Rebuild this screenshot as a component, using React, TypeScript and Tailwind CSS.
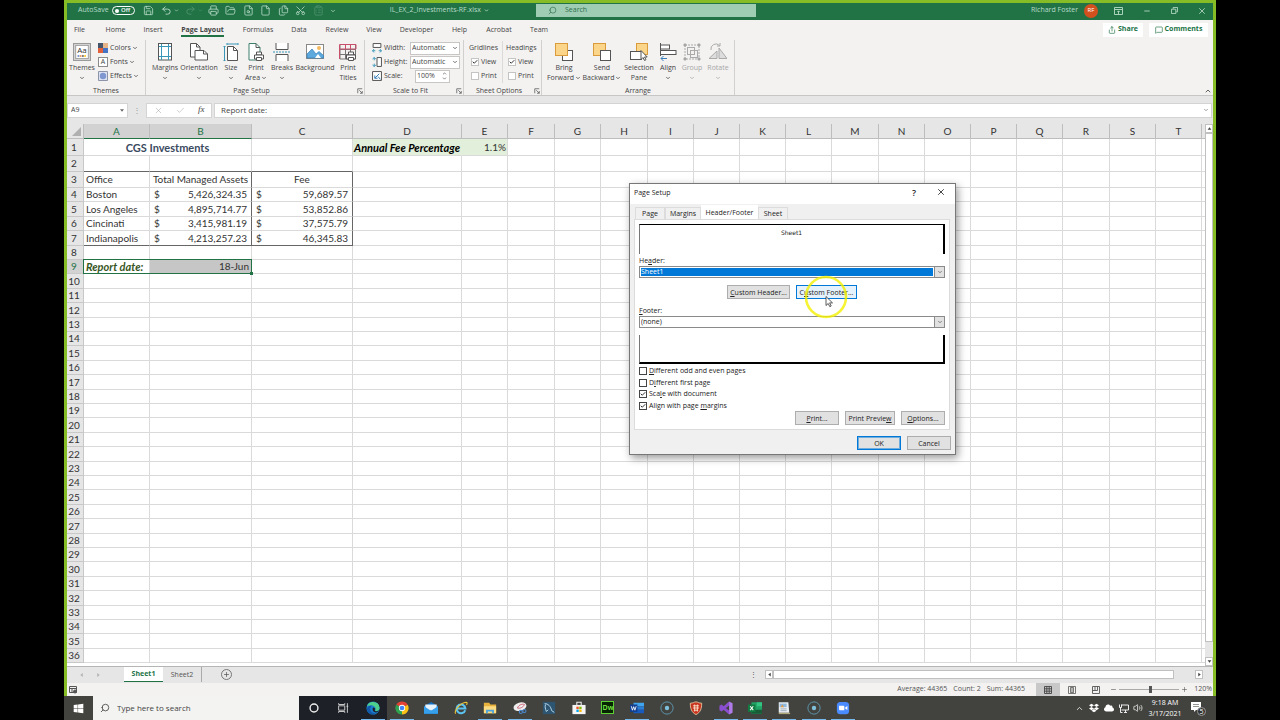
import { useState } from 'react';
import type { ReactNode } from 'react';
import clsx from 'clsx';
import {
    Check,
    ChevronDown,
    ChevronUp,
    ClipboardList,
    File,
    FileSearch,
    Files,
    FolderOpen,
    MessageSquare,
    Minus,
    Plus,
    Printer,
    Redo2,
    Save,
    Scissors,
    Search,
    Share,
    Undo2,
    Volume2,
    X,
} from 'lucide-react';
import { FaCloud, FaDropbox, FaWindows } from 'react-icons/fa';

const ribbonTabs = [
    { name: 'File', width: 'w-[25px]' },
    { name: 'Home', width: 'w-[47px]' },
    { name: 'Insert', width: 'w-[28px]' },
    { name: 'Page Layout', width: 'w-[71px]' },
    { name: 'Formulas', width: 'w-[40px]' },
    { name: 'Data', width: 'w-[42px]' },
    { name: 'Review', width: 'w-[34px]' },
    { name: 'View', width: 'w-[40px]' },
    { name: 'Developer', width: 'w-[45px]' },
    { name: 'Help', width: 'w-[41px]' },
    { name: 'Acrobat', width: 'w-[38px]' },
    { name: 'Team', width: 'w-[42px]' },
];

const columns = [
    { name: 'A', width: 'w-[66px]' },
    { name: 'B', width: 'w-[102px]' },
    { name: 'C', width: 'w-[101px]' },
    { name: 'D', width: 'w-[109px]' },
    { name: 'E', width: 'w-[46px]' },
    { name: 'F', width: 'w-[47px]' },
    { name: 'G', width: 'w-[46px]' },
    { name: 'H', width: 'w-[47px]' },
    { name: 'I', width: 'w-[46px]' },
    { name: 'J', width: 'w-[46px]' },
    { name: 'K', width: 'w-[46px]' },
    { name: 'L', width: 'w-[46px]' },
    { name: 'M', width: 'w-[47px]' },
    { name: 'N', width: 'w-[46px]' },
    { name: 'O', width: 'w-[46px]' },
    { name: 'P', width: 'w-[46px]' },
    { name: 'Q', width: 'w-[46px]' },
    { name: 'R', width: 'w-[47px]' },
    { name: 'S', width: 'w-[46px]' },
    { name: 'T', width: 'w-[46px]' },
];

const offices = [
    { office: 'Boston', assets: '5,426,324.35', fee: '59,689.57' },
    { office: 'Los Angeles', assets: '4,895,714.77', fee: '53,852.86' },
    { office: 'Cincinati', assets: '3,415,981.19', fee: '37,575.79' },
    { office: 'Indianapolis', assets: '4,213,257.23', fee: '46,345.83' },
];

/* ---------- ribbon icons, all on an 18 unit canvas ---------- */

function Icon({ children, className = 'h-[18px] w-[18px]' }: { children: ReactNode; className?: string }) {
    return (
        <svg viewBox="0 0 18 18" className={clsx('shrink-0', className)} fill="none" stroke="#555" strokeWidth="1">
            {children}
        </svg>
    );
}

const ThemesIcon = () => (
    <svg viewBox="0 0 18 18" className="h-[18px] w-[18px] border border-[#9a9a9a] bg-[#d4d4d4]" aria-hidden="true">
        <rect x="2" y="1.5" width="14" height="15" fill="#fff" stroke="#888" strokeWidth=".8" />
        <text x="9" y="10.5" textAnchor="middle" fontSize="9" fontFamily="Open Sans, sans-serif" fill="#333">
            Aa
        </text>
        <path d="M4 13.5h2" stroke="#4472c4" strokeWidth="1.6" />
        <path d="M6.5 13.5h2" stroke="#ed7d31" strokeWidth="1.6" />
        <path d="M9 13.5h2" stroke="#555" strokeWidth="1.6" />
        <path d="M11.5 13.5h2" stroke="#ffc000" strokeWidth="1.6" />
    </svg>
);

const MarginsIcon = () => (
    <Icon>
        <rect x="2.5" y=".5" width="13" height="16.5" fill="#fff" />
        <path d="M5.5 1v16M12.5 1v16M3 3.5h12M3 13.5h12" stroke="#3a96b8" />
    </Icon>
);

const OrientationIcon = () => (
    <Icon>
        <path d="M.5 .5h6l3.5 3.5v10H.5z" fill="#fff" />
        <path d="M6.5 .5v3.5h3.5" />
        <path d="M5 7.5h9l3.5 3.5v6H5z" fill="#fff" />
        <path d="M13.5 7.5v3.5h4" />
    </Icon>
);

const SizeIcon = () => (
    <Icon>
        <path d="M5.5 3.5h6l4 4v10h-10z" fill="#fff" />
        <path d="M11.5 3.5v4h4" />
        <path d="M5 1h11M2.5 3.5v14M5 0v2M16 0v2M1.5 3.5h2M1.5 17.5h2" stroke="#3a96b8" />
    </Icon>
);

const PrinterPart = () => (
    <>
        <path d="M9.5 9h5v3h-5z" fill="#fff" />
        <path d="M7.5 12h9v4h-9z" fill="#fff" />
        <path d="M9.5 14.5h5v3h-5z" fill="#fff" />
    </>
);

const PrintAreaIcon = () => (
    <Icon>
        <path d="M2 .5h7l4 4v12.5H2z" fill="#fff" stroke="#3d7f6d" />
        <path d="M9 .5v4h4" />
        <PrinterPart />
    </Icon>
);

const BreaksIcon = () => (
    <Icon>
        <path d="M3 0v6.5h12V0M3 18v-6.5h12V18" fill="#fff" />
        <path d="M0 9h18" stroke="#3a96b8" strokeDasharray="2 1" />
    </Icon>
);

const BackgroundIcon = () => (
    <Icon>
        <rect x=".5" y="1.5" width="17" height="14" fill="#fff" stroke="#888" />
        <circle cx="13" cy="5" r="2" fill="#f4b860" stroke="none" />
        <path d="M1 11l5-5 4 5 3-2.5 4.5 4V15H1z" fill="#5da9dd" stroke="#3480b8" strokeWidth=".7" />
        <path d="M9 15l3-4 3 4z" fill="#fff" stroke="none" />
    </Icon>
);

const PrintTitlesIcon = () => (
    <Icon>
        <path d="M1 6.5h16M1 11.5h16M6.5 2v14M11.5 2v14M1 2v14h15.5V2" stroke="#777" />
        <path d="M.5 1.5h16.5v4.5H.5zM6.5 2v4M11.5 2v4M.5 6v10" stroke="#c9506a" />
        <PrinterPart />
    </Icon>
);

const BringForwardIcon = () => (
    <Icon>
        <rect x="7.5" y="7.5" width="10" height="10" fill="#fff" />
        <rect x=".5" y=".5" width="12" height="12" fill="#fbd58a" stroke="#d99b3c" />
    </Icon>
);

const SendBackwardIcon = () => (
    <Icon>
        <rect x=".5" y=".5" width="12" height="12" fill="#fbd58a" stroke="#d99b3c" />
        <rect x="7.5" y="7.5" width="10" height="10" fill="#fff" />
    </Icon>
);

const SelectionPaneIcon = () => (
    <Icon>
        <rect x="6.5" y=".5" width="11" height="11" fill="#fbd58a" stroke="#d99b3c" />
        <rect x=".5" y="8.5" width="11" height="8" fill="#fff" />
        <path d="M11 7.5v9l2-2 1.5 3 1.5-.8-1.5-2.7h2.7z" fill="#fff" />
    </Icon>
);

const AlignIcon = () => (
    <Icon>
        <path d="M1.5 0v13" />
        <rect x="1.5" y="2" width="9" height="4" fill="#fff" />
        <rect x="1.5" y="7.5" width="15.5" height="4" fill="#fff" />
        <path d="M8 15.5H2M4.5 13L2 15.5 4.5 18" stroke="#3a7fb8" />
    </Icon>
);

const GroupIcon = () => (
    <Icon>
        <g stroke="#aaa">
            <rect x="2" y="2" width="14" height="14" strokeDasharray="2 1" />
            <rect x="4.5" y="4.5" width="7" height="7" />
            <rect x="7.5" y="7.5" width="7" height="7" />
            <path d="M1 1h2v2H1zM15 1h2v2h-2zM1 15h2v2H1zM15 15h2v2h-2z" fill="#999" />
        </g>
    </Icon>
);

const RotateIcon = () => (
    <Icon>
        <g stroke="#aaa">
            <path d="M0 15.5h8V8zM10 15.5h8L10 5z" fill="#ddd" />
            <path d="M2 7a5 5 0 0 1 8.500-4.500M11 0v3H8" />
        </g>
    </Icon>
);

const WidthIcon = () => (
    <Icon className="h-[10px] w-[10px]">
        <path d="M2 1h14v7H2z" strokeWidth="1.8" fill="#fff" />
        <path d="M1 14h5M12 14h5M3.5 11L1 14l2.5 3M14.5 11l2.5 3-2.5 3" stroke="#3a96b8" strokeWidth="1.8" />
    </Icon>
);

const HeightIcon = () => (
    <Icon className="h-[10px] w-[10px]">
        <path d="M9 1h8v16H9z" strokeWidth="1.8" fill="#fff" />
        <path d="M4 1v5M4 12v5M1 3.5L4 1l3 2.5M1 14.5L4 17l3-2.5" stroke="#3a96b8" strokeWidth="1.8" />
    </Icon>
);

const ScaleIcon = () => (
    <Icon className="h-[10px] w-[10px]">
        <path d="M1 1h16v16H1z" strokeWidth="1.8" fill="#fff" />
        <path d="M5 13l8-8M5 8v5h5M11 10l4 5" stroke="#3a7fb8" strokeWidth="1.8" />
    </Icon>
);

/* ---------- ribbon parts ---------- */

function RibbonGroup({
    label,
    width,
    launcher,
    children,
}: {
    label: string;
    width: string;
    launcher?: boolean;
    children: ReactNode;
}) {
    return (
        <section className={clsx('flex shrink-0 flex-col border-r border-[#d2d0ce]', width)}>
            <div className="flex h-[46px] items-start">{children}</div>
            <div className="flex h-[9px] items-center leading-[9px]">
                <span className="flex-1 text-center">{label}</span>
                {launcher && (
                    <button type="button" aria-label={`${label} settings`} className="mr-px">
                        <svg viewBox="0 0 8 8" className="h-[6px] w-[6px]" fill="none" stroke="#555" strokeWidth="1">
                            <path d="M1 7V1h6M3 3l4 4M7 4v3H4" />
                        </svg>
                    </button>
                )}
            </div>
        </section>
    );
}

function BigButton({
    lines,
    icon,
    width,
    arrow,
    disabled,
}: {
    lines: string[];
    icon: ReactNode;
    width: string;
    arrow?: boolean;
    disabled?: boolean;
}) {
    return (
        <button
            type="button"
            disabled={disabled}
            className={clsx(
                'flex shrink-0 flex-col items-center whitespace-nowrap pt-[3px] leading-[10px]',
                width,
                disabled && 'text-[#a6a6a6]',
            )}
        >
            {icon}
            <span className="mt-[2px]">{lines[0]}</span>
            <span className="flex h-[9px] items-center gap-px">
                {lines[1]}
                {arrow && <ChevronDown size={6} strokeWidth={3} />}
            </span>
        </button>
    );
}

function SmallMenu({ label, icon }: { label: string; icon: ReactNode }) {
    return (
        <button type="button" className="flex h-[14px] items-center gap-px">
            {icon}
            <span className="ml-px">{label}</span>
            <ChevronDown size={6} strokeWidth={3} />
        </button>
    );
}

function Tick({ id, defaultChecked = false, tone }: { id: string; defaultChecked?: boolean; tone: string }) {
    const [checked, setChecked] = useState(defaultChecked);

    return (
        <span className="relative flex h-2 w-2 shrink-0">
            <input
                id={id}
                type="checkbox"
                checked={checked}
                onChange={(e) => setChecked(e.target.checked)}
                className={clsx('h-2 w-2 appearance-none border bg-white', tone)}
            />
            {checked && (
                <Check size={6} strokeWidth={4} className="pointer-events-none absolute left-px top-px text-[#333]" />
            )}
        </span>
    );
}

function RibbonCheck({ id, label, defaultChecked }: { id: string; label: string; defaultChecked?: boolean }) {
    return (
        <div className="flex h-[14px] items-center gap-[2px]">
            <Tick id={id} defaultChecked={defaultChecked} tone="border-[#c4c4c4]" />
            <label htmlFor={id}>{label}</label>
        </div>
    );
}

function AutoSelect({ id }: { id: string }) {
    return (
        <span className="flex h-[13px] w-[50px] items-center border border-[#c8c6c4] bg-white pl-px pr-px">
            <select id={id} className="min-w-0 flex-1 appearance-none bg-transparent">
                <option>Automatic</option>
            </select>
            <ChevronDown size={6} strokeWidth={3} />
        </span>
    );
}

function TitleBar() {
    return (
        <header className="flex h-[17px] items-center bg-[#217346] pb-[2px] text-[7px] text-[#b9dcc8]">
            <div className="flex w-[469px] shrink-0 items-center">
                <span className="ml-[11px] w-[34px] whitespace-nowrap">AutoSave</span>
                <button
                    type="button"
                    role="switch"
                    aria-checked="false"
                    aria-label="AutoSave"
                    className="flex h-[9px] w-[23px] items-center gap-[2px] rounded-full border border-white pl-[2px] text-[6px] font-semibold leading-[7px] text-white"
                >
                    <span className="h-1 w-1 rounded-full bg-white" />
                    Off
                </button>
                <div className="ml-2 flex items-center">
                    <Save size={11} strokeWidth={1.75} />
                    <Undo2 size={11} strokeWidth={2} className="ml-[7px]" />
                    <ChevronDown size={5} strokeWidth={3} className="ml-[2px]" />
                    <Redo2 size={11} strokeWidth={2} className="ml-[6px] opacity-30" />
                    <ChevronDown size={5} strokeWidth={3} className="ml-[2px] opacity-30" />
                    <Printer size={11} strokeWidth={1.75} className="ml-[5px]" />
                    <FolderOpen size={11} strokeWidth={1.75} className="ml-[6px]" />
                    <FileSearch size={11} strokeWidth={1.75} className="ml-[7px]" />
                    <File size={11} strokeWidth={1.75} className="ml-[6px]" />
                    <Files size={11} strokeWidth={1.75} className="ml-[7px]" />
                    <Scissors size={11} strokeWidth={1.75} className="ml-[6px] -rotate-90" />
                    <ClipboardList size={11} strokeWidth={1.75} className="ml-[7px] opacity-30" />
                    <ChevronDown size={6} strokeWidth={3} className="ml-[6px]" />
                </div>
                <span className="ml-auto mr-[47px] flex items-center gap-[3px] whitespace-nowrap">
                    IL_EX_2_Investments-RF.xlsx
                    <ChevronDown size={5} strokeWidth={4} />
                </span>
            </div>
            <label className="flex h-[13px] w-[220px] shrink-0 items-center bg-[#9fcdb3] text-[#2c6e4b]">
                <Search size={9} strokeWidth={1.75} className="ml-3 -scale-x-100" />
                <input
                    type="text"
                    aria-label="Search"
                    placeholder="Search"
                    className="ml-2 min-w-0 flex-1 bg-transparent placeholder:text-[#2c6e4b]"
                />
            </label>
            <div className="ml-auto flex items-center">
                <span className="mr-[6px] whitespace-nowrap">Richard Foster</span>
                <span className="flex h-[14px] w-[14px] items-center justify-center rounded-full bg-[#d2501e] text-[6px] text-white">
                    RF
                </span>
                <button type="button" aria-label="Ribbon display options" className="ml-4">
                    <svg viewBox="0 0 9 8" className="h-2 w-[9px]" fill="none" stroke="currentColor">
                        <path d="M.5 .5h8v7h-8zM1 2.5h7M4.5 7V4M3.3 5l1.2-1.2L5.7 5" strokeWidth=".9" />
                    </svg>
                </button>
                <button type="button" aria-label="Minimize" className="ml-5">
                    <Minus size={8} strokeWidth={2.5} />
                </button>
                <button type="button" aria-label="Restore" className="ml-5">
                    <svg viewBox="0 0 8 8" className="h-[7px] w-[7px]" fill="none" stroke="currentColor">
                        <path d="M.5 2.5h5v5h-5zM2.5 2V.5h5v5H6" />
                    </svg>
                </button>
                <button type="button" aria-label="Close" className="ml-[19px] mr-[6px]">
                    <X size={10} strokeWidth={2} />
                </button>
            </div>
        </header>
    );
}

function Ribbon() {
    return (
        <div className="bg-[#f3f2f1] text-[7px] text-[#444]">
            <nav className="flex h-[19px] items-center">
                {ribbonTabs.map((tab) => (
                    <a
                        key={tab.name}
                        href="#ribbon"
                        className={clsx('flex h-full shrink-0 justify-center whitespace-nowrap', tab.width)}
                    >
                        <span
                            className={clsx(
                                'mt-[4px] h-[12px] leading-[12px]',
                                tab.name === 'Page Layout' && 'h-[13px] border-b-2 border-[#217346] font-bold',
                            )}
                        >
                            {tab.name}
                        </span>
                    </a>
                ))}
                <button
                    type="button"
                    className="ml-auto flex h-[14px] w-[40px] items-center justify-center gap-[2px] bg-white font-bold text-[#217346]"
                >
                    <Share size={8} />
                    Share
                </button>
                <button
                    type="button"
                    className="ml-[6px] mr-[5px] flex h-[14px] w-[59px] items-center justify-center gap-[2px] bg-white font-bold text-[#217346]"
                >
                    <MessageSquare size={8} />
                    Comments
                </button>
            </nav>

            <div id="ribbon" className="flex h-[57px] border-b border-[#c6c6c6] pt-px">
                <RibbonGroup label="Themes" width="w-[79px]">
                    <BigButton lines={['Themes']} icon={<ThemesIcon />} width="w-[30px]" arrow />
                    <div className="ml-px flex flex-col pt-px">
                        <SmallMenu
                            label="Colors"
                            icon={
                                <svg viewBox="0 0 10 10" className="h-[10px] w-[10px]">
                                    <path d="M0 0h5v5H0z" fill="#44546a" />
                                    <path d="M5 0h5v5H5z" fill="#e7b48a" />
                                    <path d="M0 5h5v5H0z" fill="#e2603a" />
                                    <path d="M5 5h5v5H5z" fill="#4472c4" />
                                </svg>
                            }
                        />
                        <SmallMenu
                            label="Fonts"
                            icon={
                                <span className="flex h-[10px] w-[10px] items-center justify-center border border-[#8a8a8a] bg-white">
                                    A
                                </span>
                            }
                        />
                        <SmallMenu
                            label="Effects"
                            icon={
                                <svg viewBox="0 0 10 10" className="h-[10px] w-[10px]">
                                    <path d="M.5 .5h9v9h-9z" fill="#dce3f3" stroke="#8c94a8" />
                                    <circle cx="5" cy="5" r="3.2" fill="#7f97d0" />
                                </svg>
                            }
                        />
                    </div>
                </RibbonGroup>

                <RibbonGroup label="Page Setup" width="w-[219px]" launcher>
                    <div className="flex pl-[5px]">
                        <BigButton lines={['Margins']} icon={<MarginsIcon />} width="w-[28px]" arrow />
                        <BigButton lines={['Orientation']} icon={<OrientationIcon />} width="w-[40px]" arrow />
                        <BigButton lines={['Size']} icon={<SizeIcon />} width="w-[24px]" arrow />
                        <BigButton lines={['Print', 'Area']} icon={<PrintAreaIcon />} width="w-[26px]" arrow />
                        <BigButton lines={['Breaks']} icon={<BreaksIcon />} width="w-[26px]" arrow />
                        <BigButton lines={['Background']} icon={<BackgroundIcon />} width="w-[40px]" />
                        <BigButton lines={['Print', 'Titles']} icon={<PrintTitlesIcon />} width="w-[26px]" />
                    </div>
                </RibbonGroup>

                <RibbonGroup label="Scale to Fit" width="w-[99px]" launcher>
                    <div className="flex flex-1 flex-col pl-[7px] pr-[3px] pt-px">
                        <div className="flex h-[14px] items-center gap-[2px]">
                            <WidthIcon />
                            <label htmlFor="fit-width" className="flex-1">
                                Width:
                            </label>
                            <AutoSelect id="fit-width" />
                        </div>
                        <div className="flex h-[14px] items-center gap-[2px]">
                            <HeightIcon />
                            <label htmlFor="fit-height" className="flex-1">
                                Height:
                            </label>
                            <AutoSelect id="fit-height" />
                        </div>
                        <div className="flex h-[14px] items-center gap-[2px]">
                            <ScaleIcon />
                            <label htmlFor="fit-scale" className="flex-1">
                                Scale:
                            </label>
                            <span className="mr-[10px] flex h-[13px] w-[35px] items-center border border-[#c8c6c4] bg-white">
                                <input
                                    id="fit-scale"
                                    type="text"
                                    defaultValue="100%"
                                    className="min-w-0 flex-1 bg-transparent pl-px"
                                />
                                <span className="flex flex-col pr-[2px]">
                                    <ChevronUp size={5} strokeWidth={3} />
                                    <ChevronDown size={5} strokeWidth={3} />
                                </span>
                            </span>
                        </div>
                    </div>
                </RibbonGroup>

                <RibbonGroup label="Sheet Options" width="w-[78px]" launcher>
                    <div className="flex flex-1 pt-px">
                        <fieldset className="flex w-[39px] flex-col border-r border-[#dcdad8] pl-[7px]">
                            <legend className="float-left -ml-[2px] h-[14px] leading-[14px]">Gridlines</legend>
                            <RibbonCheck id="grid-view" label="View" defaultChecked />
                            <RibbonCheck id="grid-print" label="Print" />
                        </fieldset>
                        <fieldset className="flex flex-col pl-[5px]">
                            <legend className="float-left -ml-[2px] h-[14px] leading-[14px]">Headings</legend>
                            <RibbonCheck id="head-view" label="View" defaultChecked />
                            <RibbonCheck id="head-print" label="Print" />
                        </fieldset>
                    </div>
                </RibbonGroup>

                <RibbonGroup label="Arrange" width="w-[193px]">
                    <div className="flex pl-[3px]">
                        <BigButton lines={['Bring', 'Forward']} icon={<BringForwardIcon />} width="w-[38px]" arrow />
                        <BigButton lines={['Send', 'Backward']} icon={<SendBackwardIcon />} width="w-[38px]" arrow />
                        <BigButton lines={['Selection', 'Pane']} icon={<SelectionPaneIcon />} width="w-[36px]" />
                        <BigButton lines={['Align']} icon={<AlignIcon />} width="w-[22px]" arrow />
                        <BigButton lines={['Group']} icon={<GroupIcon />} width="w-[26px]" arrow disabled />
                        <BigButton lines={['Rotate']} icon={<RotateIcon />} width="w-[26px]" arrow disabled />
                    </div>
                </RibbonGroup>

                <button type="button" aria-label="Collapse ribbon" className="ml-auto mr-px self-end">
                    <ChevronUp size={8} strokeWidth={2.5} />
                </button>
            </div>
        </div>
    );
}

function FormulaBar() {
    return (
        <div className="flex h-[28px] items-center bg-[#e6e6e6] text-[8px] text-[#444]">
            <label className="flex h-[15px] w-[61px] items-center border border-[#d4d4d4] bg-white">
                <input
                    type="text"
                    aria-label="Name box"
                    defaultValue="A9"
                    className="min-w-0 flex-1 bg-transparent pl-[3px] text-[7px]"
                />
                <svg viewBox="0 0 6 4" className="mr-[3px] h-[3px] w-[4px]" fill="#666">
                    <path d="M0 0h6L3 4z" />
                </svg>
            </label>
            <span className="w-[18px] text-center text-[#999]">⋮</span>
            <div className="flex h-[15px] w-[66px] items-center justify-around border border-[#d4d4d4] bg-white">
                <X size={9} strokeWidth={1.5} className="text-[#aaa]" />
                <Check size={9} strokeWidth={1.5} className="text-[#aaa]" />
                <span className="font-['Liberation_Serif',serif] text-[9px] italic">fx</span>
            </div>
            <label className="ml-[2px] mr-px flex h-[15px] flex-1 items-center border border-[#d4d4d4] bg-white">
                <input
                    type="text"
                    aria-label="Formula bar"
                    defaultValue="Report date:"
                    className="min-w-0 flex-1 bg-transparent pl-[6px]"
                />
                <ChevronDown size={6} strokeWidth={2} className="mr-[2px]" />
            </label>
        </div>
    );
}

/* ---------- worksheet ---------- */

// Rows average 14.4px at 120% zoom, so some are a pixel taller.
function rowHeight(row: number) {
    if (row === 1) return 'h-[17px]';
    if (row <= 3) return 'h-[16px]';
    return row % 5 === 0 || row % 5 === 2 ? 'h-[15px]' : 'h-[14px]';
}

const cell = 'whitespace-nowrap border-b border-r border-[#dadada] p-0 leading-[13px]';
const inked = 'border-r-[#666]';

function Accounting({ value, className }: { value: string; className?: string }) {
    return (
        <td className={clsx(cell, className)}>
            <div className="flex justify-between pl-1 pr-[4px]">
                <span>$</span>
                <span>{value}</span>
            </div>
        </td>
    );
}

function rowCells(row: number) {
    if (row === 1) {
        return {
            used: 5,
            cells: (
                <>
                    <td colSpan={2} className={clsx(cell, 'text-center text-[11px] font-bold text-[#3b4a5f]')}>
                        CGS Investments
                    </td>
                    <td className={cell} />
                    <td
                        className={clsx(
                            cell,
                            'border-r-[#e2efda] bg-[#e2efda] text-center text-[11px] font-bold italic text-black',
                        )}
                    >
                        Annual Fee Percentage
                    </td>
                    <td className={clsx(cell, 'bg-[#e2efda] pr-px text-right')}>1.1%</td>
                </>
            ),
        };
    }
    if (row === 2) {
        return {
            used: 3,
            cells: ['A', 'B', 'C'].map((name) => <td key={name} className={clsx(cell, 'border-b-[#666]')} />),
        };
    }
    if (row === 3) {
        return {
            used: 3,
            cells: (
                <>
                    <td className={clsx(cell, 'pl-[2px]')}>Office</td>
                    <td className={clsx(cell, inked, 'text-center')}>Total Managed Assets</td>
                    <td className={clsx(cell, inked, 'text-center')}>Fee</td>
                </>
            ),
        };
    }
    const entry = offices[row - 4];
    if (entry) {
        const bottom = row === 7 ? 'border-b-[#666]' : '';
        return {
            used: 3,
            cells: (
                <>
                    <td className={clsx(cell, 'pl-[2px]', bottom)}>{entry.office}</td>
                    <Accounting value={entry.assets} className={clsx(inked, bottom)} />
                    <Accounting value={entry.fee} className={clsx(inked, bottom)} />
                </>
            ),
        };
    }
    if (row === 9) {
        return {
            used: 2,
            cells: (
                <>
                    <td className={clsx(cell, 'relative pl-[2px] text-[11px] font-bold italic text-[#375623]')}>
                        Report date:
                        <span className="pointer-events-none absolute -left-px -top-px h-[15px] w-[169px] border border-[#217346]">
                            <span className="absolute -bottom-[2px] -right-[2px] h-[3px] w-[3px] bg-[#217346]" />
                        </span>
                    </td>
                    <td className={clsx(cell, 'bg-[#c6c6c6] pr-[2px] text-right')}>18-Jun</td>
                </>
            ),
        };
    }
    return { used: 0, cells: null };
}

function Worksheet() {
    const rows = Array.from({ length: 36 }, (_, i) => i + 1);

    return (
        <div className="flex min-h-0 flex-1 bg-[#e6e6e6]">
            <div className="min-w-0 flex-1 overflow-hidden bg-white">
                <table className="w-full table-fixed border-separate border-spacing-0 font-[Lato,sans-serif] text-[10px] text-[#333]">
                    <colgroup>
                        <col className="w-[17px]" />
                        {columns.map((column) => (
                            <col key={column.name} className={column.width} />
                        ))}
                        <col />
                    </colgroup>
                    <thead>
                        <tr className="bg-[#e6e6e6]">
                            <th className="h-[15px] border-b border-r border-[#bdbdbd] p-0">
                                <svg viewBox="0 0 10 10" className="ml-auto mr-[2px] h-[9px] w-[9px]" fill="#b0b0b0">
                                    <path d="M10 0v10H0z" />
                                </svg>
                            </th>
                            {columns.map((column) => (
                                <th
                                    key={column.name}
                                    className={clsx(
                                        'border-b border-r border-[#bdbdbd] p-0 font-normal leading-[13px]',
                                        column.name <= 'B' && 'border-b-[#217346] bg-[#d2d2d2] text-[#217346]',
                                    )}
                                >
                                    {column.name}
                                </th>
                            ))}
                            <th className="border-b border-[#bdbdbd] p-0" />
                        </tr>
                    </thead>
                    <tbody>
                        {rows.map((row) => {
                            const { used, cells } = rowCells(row);
                            return (
                                <tr key={row}>
                                    <th
                                        className={clsx(
                                            'border-b border-r border-[#c8c8c8] p-0 pr-[2px] font-normal leading-[13px]',
                                            rowHeight(row),
                                            row === 9 ? 'bg-[#d2d2d2] text-[#217346]' : 'bg-[#e6e6e6]',
                                        )}
                                    >
                                        {row}
                                    </th>
                                    {cells}
                                    {columns.slice(used).map((column) => (
                                        <td key={column.name} className={cell} />
                                    ))}
                                    <td className="border-b border-[#dadada] p-0" />
                                </tr>
                            );
                        })}
                    </tbody>
                </table>
            </div>
            <div className="flex w-[8px] shrink-0 flex-col text-[#555]">
                <ScrollArrow direction="up" />
                <div className="flex-1 border border-[#c0c0c0] bg-white" />
                <div className="h-[15px]" />
                <ScrollArrow direction="down" />
            </div>
        </div>
    );
}

function ScrollArrow({ direction }: { direction: 'up' | 'down' | 'left' | 'right' }) {
    const paths = { up: 'M1 6h6L4 2z', down: 'M1 2h6L4 6z', left: 'M6 1v6L2 4z', right: 'M2 1v6l4-3z' };

    return (
        <button
            type="button"
            aria-label={`Scroll ${direction}`}
            className="flex h-[9px] w-[8px] items-center justify-center border border-[#c0c0c0] bg-white"
        >
            <svg viewBox="0 0 8 8" className="h-[5px] w-[5px]" fill="#444">
                <path d={paths[direction]} />
            </svg>
        </button>
    );
}

function SheetTabs() {
    return (
        <div className="flex h-[17px] items-start border-t border-[#b5b5b5] bg-[#e6e6e6] text-[7px] text-[#555]">
            <div className="flex h-[15px] w-[57px] items-center gap-[14px] pl-[13px]">
                <svg viewBox="0 0 4 6" className="h-[4px] w-[3px]" fill="#b5b5b5">
                    <path d="M4 0v6L0 3z" />
                </svg>
                <svg viewBox="0 0 4 6" className="h-[4px] w-[3px]" fill="#b5b5b5">
                    <path d="M0 0v6l4-3z" />
                </svg>
            </div>
            <button
                type="button"
                className="h-[15px] w-[39px] border-b border-[#217346] bg-white font-bold leading-[14px] text-[#217346]"
            >
                Sheet1
            </button>
            <button type="button" className="h-[15px] w-[39px] border-r border-[#aaa] leading-[14px]">
                Sheet2
            </button>
            <button
                type="button"
                aria-label="New sheet"
                className="ml-[19px] mt-[2px] flex h-[11px] w-[11px] items-center justify-center rounded-full border border-[#777]"
            >
                <Plus size={7} strokeWidth={2.5} />
            </button>
            <div className="ml-auto mr-[10px] mt-[3px] flex w-[453px] items-center">
                <span className="w-[15px] leading-[9px]">⋮</span>
                <ScrollArrow direction="left" />
                <div className="h-[9px] flex-1 border border-[#c0c0c0] bg-white" />
                <div className="w-[21px]" />
                <ScrollArrow direction="right" />
            </div>
        </div>
    );
}

function StatusBar() {
    return (
        <footer className="flex h-[13px] items-center bg-[#f3f2f1] text-[7px] text-[#555]">
            <svg viewBox="0 0 9 8" className="ml-[2px] h-2 w-[9px]" fill="none" stroke="#555">
                <path d="M.5 .5h7v6h-7zM1 2.5h6M3 2.5v4" />
                <circle cx="6" cy="5.5" r="1.5" fill="#555" />
            </svg>
            <div className="ml-auto flex gap-[6px] whitespace-nowrap pr-[11px]">
                <span>Average: 44365</span>
                <span>Count: 2</span>
                <span>Sum: 44365</span>
            </div>
            <button type="button" aria-label="Normal view" className="flex h-full w-[24px] items-center justify-center bg-[#c8c8c8]">
                <svg viewBox="0 0 8 8" className="h-2 w-2" fill="none" stroke="#444">
                    <path d="M.5 .5h7v7h-7zM.5 2.8h7M.5 5.2h7M2.8 .5v7M5.2 .5v7" strokeWidth=".9" />
                </svg>
            </button>
            <button type="button" aria-label="Page layout view" className="flex h-full w-[24px] items-center justify-center">
                <svg viewBox="0 0 8 8" className="h-2 w-2" fill="none" stroke="#555">
                    <path d="M.5 .5h7v7h-7zM2.5 1.5h3v5h-3zM3 3h2M3 5h2" strokeWidth=".8" />
                </svg>
            </button>
            <button type="button" aria-label="Page break preview" className="flex h-full w-[24px] items-center justify-center">
                <svg viewBox="0 0 8 8" className="h-2 w-2" fill="none" stroke="#555">
                    <path d="M.5 .5h7v7h-7zM3 .5v4M5.5 .5v4M.5 4.5h5" strokeWidth=".9" />
                </svg>
            </button>
            <Minus size={7} className="ml-[2px]" />
            <input
                type="range"
                aria-label="Zoom"
                min={0}
                max={100}
                defaultValue={53}
                className="mx-[2px] h-2 w-[60px] appearance-none bg-[linear-gradient(#aaa,#aaa)] bg-[length:100%_1px] bg-center bg-no-repeat [&::-webkit-slider-thumb]:h-[7px] [&::-webkit-slider-thumb]:w-[3px] [&::-webkit-slider-thumb]:appearance-none [&::-webkit-slider-thumb]:bg-[#555]"
            />
            <Plus size={7} />
            <span className="w-[25px] pr-px text-right">120%</span>
        </footer>
    );
}

/* ---------- page setup dialog ---------- */

function DialogButton({ children, className }: { children: ReactNode; className: string }) {
    return (
        <button
            type="button"
            className={clsx('flex h-[14px] items-center justify-center whitespace-pre border', className)}
        >
            {children}
        </button>
    );
}

function DialogSelect({ id, value, active }: { id: string; value: string; active?: boolean }) {
    return (
        <span className="flex h-[12px] border border-[#8a8a8a] bg-white">
            <select
                id={id}
                className={clsx(
                    'm-px mr-0 min-w-0 flex-1 appearance-none leading-[8px]',
                    active ? 'bg-[#0078d7] text-white' : 'bg-white',
                )}
            >
                <option>{value}</option>
            </select>
            <span className="ml-px flex w-[10px] items-center justify-center border-l border-[#8a8a8a] bg-[#e1e1e1]">
                <ChevronDown size={6} strokeWidth={2} />
            </span>
        </span>
    );
}

const plain = 'border-[#adadad] bg-[#e1e1e1]';
const idleTab = 'h-[12px] border border-b-0 border-[#dcdcdc]';

function PageSetupDialog() {
    return (
        <div
            role="dialog"
            aria-label="Page Setup"
            className="absolute left-[565px] top-[183px] flex w-[327px] flex-col border border-[#777] bg-[#f0f0f0] pb-[4px] text-[7px] leading-[11px] text-[#222] shadow-[2px_3px_8px_rgba(0,0,0,0.4)]"
        >
            <div className="flex h-[20px] items-center bg-white pb-[4px] pl-[4px]">
                <span className="flex-1">Page Setup</span>
                <button type="button" aria-label="Help" className="mr-[20px] text-[9px] font-semibold">
                    ?
                </button>
                <button type="button" aria-label="Close dialog" className="mr-[9px]">
                    <X size={10} strokeWidth={2} />
                </button>
            </div>

            <div role="tablist" className="flex h-[15px] items-end pl-[5px]">
                <button type="button" role="tab" className={clsx(idleTab, 'w-[30px]')}>
                    Page
                </button>
                <button type="button" role="tab" className={clsx(idleTab, 'w-[36px]')}>
                    Margins
                </button>
                <button type="button" role="tab" aria-selected="true" className="h-[14px] w-[57px] bg-white pt-px">
                    Header/Footer
                </button>
                <button type="button" role="tab" className={clsx(idleTab, 'w-[30px]')}>
                    Sheet
                </button>
            </div>

            <div className="ml-[4px] mr-[5px] border border-[#dcdcdc] bg-white p-[4px]">
                <div className="h-[30px] border-l border-r-2 border-t border-black border-l-[#777] pt-[2px] text-center font-['DejaVu_Sans',sans-serif] text-[6px]">
                    Sheet1
                </div>
                <label htmlFor="page-header" className="mt-px block">
                    He<u>a</u>der:
                </label>
                <DialogSelect id="page-header" value="Sheet1" active />

                <div className="mt-[7px] flex justify-center gap-[6px]">
                    <DialogButton className={clsx(plain, 'w-[63px]')}>
                        <u>C</u>ustom Header...
                    </DialogButton>
                    <DialogButton className="w-[61px] border-[#0078d7] bg-[#e5f1fb]">
                        C<u>u</u>stom Footer...
                    </DialogButton>
                </div>

                <label htmlFor="page-footer" className="mt-[6px] block">
                    <u>F</u>ooter:
                </label>
                <DialogSelect id="page-footer" value="(none)" />

                <div className="mt-[7px] h-[29px] border-b-2 border-l border-r-2 border-black border-l-[#777]" />

                <div className="mt-px flex flex-col">
                    <div className="flex items-center gap-[2px]">
                        <Tick id="odd-even" tone="border-[#444]" />
                        <label htmlFor="odd-even">
                            <u>D</u>ifferent odd and even pages
                        </label>
                    </div>
                    <div className="mt-px flex items-center gap-[2px]">
                        <Tick id="first-page" tone="border-[#444]" />
                        <label htmlFor="first-page">
                            D<u>i</u>fferent first page
                        </label>
                    </div>
                    <div className="flex items-center gap-[2px]">
                        <Tick id="scale-doc" tone="border-[#444]" defaultChecked />
                        <label htmlFor="scale-doc">
                            Sca<u>l</u>e with document
                        </label>
                    </div>
                    <div className="mt-px flex items-center gap-[2px]">
                        <Tick id="align-margins" tone="border-[#444]" defaultChecked />
                        <label htmlFor="align-margins">
                            Align with page <u>m</u>argins
                        </label>
                    </div>
                </div>

                <div className="flex justify-end gap-[6px]">
                    <DialogButton className={clsx(plain, 'w-[44px]')}>
                        <u>P</u>rint...
                    </DialogButton>
                    <DialogButton className={clsx(plain, 'w-[50px]')}>
                        Print Previe<u>w</u>
                    </DialogButton>
                    <DialogButton className={clsx(plain, 'w-[44px]')}>
                        <u>O</u>ptions...
                    </DialogButton>
                </div>
            </div>

            <div className="mt-[6px] flex justify-end gap-[6px] pr-[4px]">
                <DialogButton className="w-[44px] border-[#0078d7] bg-[#e1e1e1] outline outline-[#0078d7]/50 -outline-offset-2">
                    OK
                </DialogButton>
                <DialogButton className={clsx(plain, 'w-[44px]')}>Cancel</DialogButton>
            </div>

            <svg
                viewBox="0 0 44 44"
                className="pointer-events-none absolute left-[174px] top-[91px] h-[44px] w-[44px]"
                fill="none"
            >
                <circle cx="22" cy="22" r="20" stroke="#f2f000" strokeOpacity=".8" strokeWidth="2.6" />
                <path
                    d="M22 21.5v9l2.200-2 1.600 3.200 1.400-.7-1.600-3.100h2.900z"
                    fill="#fff"
                    stroke="#333"
                    strokeWidth=".8"
                />
            </svg>
        </div>
    );
}

/* ---------- taskbar ---------- */

function AppIcon({ children }: { children: ReactNode }) {
    return (
        <svg viewBox="0 0 16 16" className="h-[14px] w-[14px]" fill="none">
            {children}
        </svg>
    );
}

const RecorderIcon = () => (
    <AppIcon>
        <circle cx="8" cy="8" r="7" stroke="#5f9db8" />
        <circle cx="8" cy="8" r="2.5" fill="#7fc0dc" />
    </AppIcon>
);

const taskbarApps: { name: string; running?: boolean; dark?: boolean; icon: ReactNode }[] = [
    {
        name: 'Cortana',
        dark: true,
        icon: (
            <AppIcon>
                <circle cx="8" cy="8" r="4.500" stroke="#eee" strokeWidth="1.6" />
            </AppIcon>
        ),
    },
    {
        name: 'Task View',
        dark: true,
        icon: (
            <AppIcon>
                <path d="M3 5.5h7v5H3zM3 2.5v1.5h7V2.5M3 13.5V12h7v1.5M13 2.5v11M12 6h2" stroke="#ddd" />
            </AppIcon>
        ),
    },
    {
        name: 'Edge',
        running: true,
        dark: true,
        icon: (
            <AppIcon>
                <circle cx="8" cy="8" r="7.5" fill="#1b7fd0" />
                <path d="M1 6a7.5 7.5 0 0 1 14.5 2c0 3-3 4-5 3 2-3-1-6-4-6-2 0-4 0-5.5 1z" fill="#4fd08a" />
                <path d="M5 8c-1 4 3 7 7 6-4 3-10 1-11-4 0-4 3-5 6-5-1 .8-2 2-2 3z" fill="#1258a8" />
                <path d="M8 7.500c1.500-.5 3 1 2 3.500 2 1.300 4 .7 5-.6-1 2.600-3.500 3.300-5.500 2.300C7.500 12 7 9 8 7.500z" fill="#1f2126" />
            </AppIcon>
        ),
    },
    {
        name: 'Chrome',
        running: true,
        icon: (
            <AppIcon>
                <path d="M8 8L1.5 4.2A7.5 7.5 0 0 1 14.500 4.200z" fill="#e34133" />
                <path d="M8 8L14.5 4.2A7.5 7.5 0 0 1 8 15.500z" fill="#fbc116" />
                <path d="M8 8v7.5A7.5 7.5 0 0 1 1.500 4.200z" fill="#2fa24f" />
                <circle cx="8" cy="8" r="3.6" fill="#fff" />
                <circle cx="8" cy="8" r="2.7" fill="#4285f4" />
            </AppIcon>
        ),
    },
    {
        name: 'Mail',
        icon: (
            <AppIcon>
                <path d="M0 6l8-5 8 5v8.5H0z" fill="#1170c4" />
                <path d="M1.5 4h13v5L8 11 1.5 9z" fill="#e8f2fb" />
                <path d="M0 6l8 5 8-5v8.5H0z" fill="#36a0ec" />
            </AppIcon>
        ),
    },
    {
        name: 'Internet Explorer',
        icon: (
            <AppIcon>
                <path d="M12.8 10.5A5 5 0 1 1 13 8.500H4" stroke="#5cc2f0" strokeWidth="2.4" />
                <path d="M2 14.5C-1 12 7 2 14 1.500c1.500 0 1 2 .3 3" stroke="#f5c836" strokeWidth="1.2" />
            </AppIcon>
        ),
    },
    {
        name: 'File Explorer',
        running: true,
        icon: (
            <AppIcon>
                <path d="M1 2h6l1.5 2H15v10H1z" fill="#e9b23c" />
                <path d="M1 6h14v8H1z" fill="#fcdc82" />
                <path d="M3.5 14v-4h9v4h-2v-2h-5v2z" fill="#4aa3df" />
            </AppIcon>
        ),
    },
    {
        name: 'Snipping Tool',
        running: true,
        icon: (
            <AppIcon>
                <ellipse cx="8" cy="6.5" rx="7.5" ry="4.8" transform="rotate(-15 8 6.500)" fill="#eee" />
                <path d="M5 8c2-4 6-5 8-4-1 3-5 5-8 4z" stroke="#c9546a" />
                <circle cx="9" cy="12.5" r="1.8" stroke="#4a86c8" strokeWidth="1.2" />
                <circle cx="13" cy="11.5" r="1.8" stroke="#4a86c8" strokeWidth="1.2" />
            </AppIcon>
        ),
    },
    {
        name: 'MySQL Workbench',
        icon: (
            <AppIcon>
                <path d="M1 1h14v14H1z" fill="#2d5572" />
                <path d="M3 3c4 0 7 3 8 8l3 2M4 4c-1 3 0 5 1 8l2-2" stroke="#b9d7ea" strokeWidth="1.1" />
            </AppIcon>
        ),
    },
    {
        name: 'Microsoft Store',
        icon: (
            <AppIcon>
                <path d="M5.5 4.5V1.5h5v3" stroke="#eee" strokeWidth="1.2" />
                <path d="M.5 4.5h15V15H.5z" fill="#f4f4f4" />
                <path d="M5 6.5h2.7v2.7H5z" fill="#f25022" />
                <path d="M8.3 6.5H11v2.7H8.3z" fill="#7fba00" />
                <path d="M5 9.8h2.7v2.7H5z" fill="#00a4ef" />
                <path d="M8.3 9.8H11v2.7H8.3z" fill="#ffb900" />
            </AppIcon>
        ),
    },
    {
        name: 'Dreamweaver',
        icon: (
            <span className="flex h-[13px] w-[13px] items-center justify-center border border-[#5fd034] bg-[#072401] text-[7px] font-semibold leading-[9px] text-[#7cf04a]">
                Dw
            </span>
        ),
    },
    {
        name: 'Word',
        running: true,
        icon: (
            <AppIcon>
                <path d="M4 2h12v4H4z" fill="#41a5ee" />
                <path d="M4 6h12v4H4z" fill="#2b7cd3" />
                <path d="M4 10h12v4H4z" fill="#185abd" />
                <path d="M0 4h8.5v8.5H0z" fill="#103f91" />
                <path d="M1.5 6l1.3 4.500L4.200 6.500l1.400 4L7 6" stroke="#fff" />
            </AppIcon>
        ),
    },
    { name: 'Recorder', icon: <RecorderIcon /> },
    {
        name: 'Shield',
        icon: (
            <AppIcon>
                <path
                    d="M1.5 2.5C5 2.5 6 1 8 1s3 1.5 6.5 1.5C14.5 9 13 13 8 15.5 3 13 1.5 9 1.5 2.5z"
                    fill="#c8321e"
                    stroke="#e8c9a0"
                />
                <path d="M4.5 5.5h7M4.5 8h7M5.5 10.5h5M6.5 4v8M9.5 4v8" stroke="#fbe9d0" />
            </AppIcon>
        ),
    },
    {
        name: 'Visual Studio',
        running: true,
        icon: (
            <AppIcon>
                <path d="M11.5 .5L15.5 2.5v11l-4 2z" fill="#b07be8" />
                <path d="M11.5 .5v4.5L3 12 .5 10.7V5.3L3 4l8.5 7v4.5L3 8z" fill="#8a4fd0" />
            </AppIcon>
        ),
    },
    {
        name: 'Excel',
        running: true,
        icon: (
            <AppIcon>
                <path d="M4 1.5h12v13H4z" fill="#21a366" />
                <path d="M10 1.5h6v4.5h-6z" fill="#33c481" />
                <path d="M4 10h12v4.5H4z" fill="#185c37" />
                <path d="M0 4h8.5v8.5H0z" fill="#107c41" />
                <path d="M2.5 6l3.5 4.500M6 6l-3.500 4.500" stroke="#fff" strokeWidth="1.2" />
            </AppIcon>
        ),
    },
    {
        name: 'Viewer',
        running: true,
        icon: (
            <AppIcon>
                <path d="M2 1.5h11l1 12H2z" fill="#e8eef4" />
                <path d="M3 3h8v4H3z" fill="#8fb8dc" />
                <path d="M4 7l2-3 2 3z" fill="#e39a4a" />
                <path d="M2 13.5h13v1.5H2z" fill="#b0a878" />
                <path d="M4 9h7M4 11h7" stroke="#9aa8b5" />
            </AppIcon>
        ),
    },
    { name: 'Screen Recorder', running: true, icon: <RecorderIcon /> },
    {
        name: 'Zoom',
        running: true,
        icon: (
            <AppIcon>
                <rect x="1" y="1" width="14" height="14" rx="4" fill="#4a8cff" />
                <path d="M3.5 5.5h5a1 1 0 0 1 1 1v4h-5a1 1 0 0 1-1-1zM10.500 7.500l2.500-1.800v4.600l-2.500-1.600z" fill="#fff" />
            </AppIcon>
        ),
    },
];

function Taskbar() {
    return (
        <div className="flex h-[24px] shrink-0 items-center bg-[#42433e] text-white">
            <button type="button" aria-label="Start" className="flex h-full w-[29px] items-center justify-center">
                <FaWindows size={11} />
            </button>
            <label className="flex h-full w-[206px] items-center bg-[#f3f3f1] text-[#444]">
                <Search size={10} strokeWidth={2} className="ml-[7px] -scale-x-100" />
                <input
                    type="text"
                    aria-label="Search Windows"
                    placeholder="Type here to search"
                    className="ml-[7px] min-w-0 flex-1 bg-transparent text-[8px] placeholder:text-[#444]"
                />
            </label>
            <div className="flex h-full w-[559px]">
                {taskbarApps.map((app) => (
                    <button
                        key={app.name}
                        type="button"
                        aria-label={app.name}
                        className={clsx('flex h-full flex-1 flex-col items-center', app.dark && 'bg-[#1d2026]')}
                    >
                        <span className="flex flex-1 items-center">{app.icon}</span>
                        <span className={clsx('h-px w-[24px]', app.running && 'bg-[#76b9ed]')} />
                    </button>
                ))}
            </div>
            <div className="ml-auto flex items-center text-[7px]">
                <ChevronUp size={9} strokeWidth={2} />
                <FaDropbox size={10} className="ml-[5px]" />
                <FaCloud size={10} className="ml-[5px]" />
                <svg viewBox="0 0 10 9" className="ml-[5px] h-[9px] w-[10px]" fill="none" stroke="currentColor">
                    <path d="M2.5 1h7v5h-7M5 8.5h3M6.5 6v2M.5 .5v3h2v-3M1.5 3.5v5h2" strokeWidth=".9" />
                </svg>
                <Volume2 size={10} strokeWidth={1.75} className="ml-[4px]" />
                <div className="ml-[5px] flex w-[34px] flex-col items-center whitespace-nowrap leading-[11px]">
                    <span>9:18 AM</span>
                    <span>3/17/2021</span>
                </div>
                <button type="button" aria-label="5 notifications" className="relative ml-[9px] mr-[11px] h-[14px] w-[14px]">
                    <svg viewBox="0 0 14 14" className="h-[14px] w-[14px]" fill="none">
                        <path d="M0 1h10v8H5l-2 2V9H0z" fill="#fff" />
                        <path d="M2 3.5h6M2 5.5h6" stroke="#777" strokeWidth=".8" />
                    </svg>
                    <span className="absolute -bottom-px -right-px flex h-[9px] w-[9px] items-center justify-center rounded-full border border-[#999] bg-[#333] leading-none">
                        5
                    </span>
                </button>
            </div>
        </div>
    );
}

export default function App() {
    return (
        <div className="h-screen w-full bg-black px-16 font-['Open_Sans',sans-serif]">
            <div className="relative flex h-full flex-col">
                <div className="flex min-h-0 flex-1 flex-col border-x-[3px] border-t-[3px] border-[#86bc25]">
                    <TitleBar />
                    <Ribbon />
                    <FormulaBar />
                    <Worksheet />
                    <SheetTabs />
                    <StatusBar />
                </div>
                <Taskbar />
                <PageSetupDialog />
            </div>
        </div>
    );
}
